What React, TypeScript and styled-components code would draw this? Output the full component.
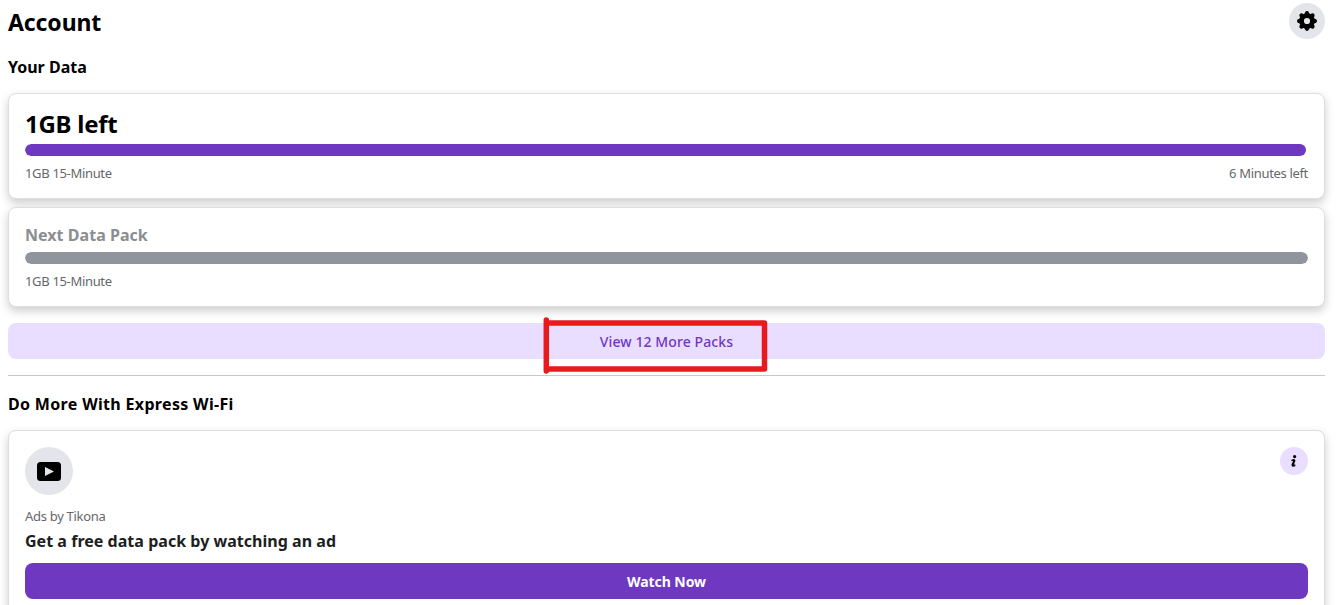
import React from "react";
import styled, { createGlobalStyle } from "styled-components";

const GlobalStyle = createGlobalStyle`
  * { box-sizing: border-box; }
  html, body { margin: 0; background: #fff; overflow: hidden; }
  body { font-family: "Noto Sans", "Open Sans", sans-serif; color: #000; }
  h1 { margin: 0; }
`;

const Page = styled.main`
  height: 605px;
  padding: 3px 15px 0 8px;
  overflow: hidden;
`;

const Header = styled.header`
  display: flex;
  align-items: center;
  justify-content: space-between;
  height: 36px;
`;

interface LabelProps {
  $size: number;
  $line: number;
  $weight?: number;
  $color?: string;
  $track?: number;
  $drop?: number;
}

const Label = styled.span<LabelProps>`
  display: block;
  white-space: nowrap;
  padding-top: ${(p) => p.$drop ?? 0}px;
  font-size: ${(p) => p.$size}px;
  line-height: ${(p) => p.$line}px;
  font-weight: ${(p) => p.$weight ?? 400};
  color: ${(p) => p.$color ?? "#000"};
  letter-spacing: ${(p) => p.$track ?? 0}px;
`;

const SectionTitle = styled.div`
  padding: 16px 0 14px;
`;

const Circle = styled.div<{ $size: number; $bg: string }>`
  display: flex;
  flex: none;
  align-items: center;
  justify-content: center;
  width: ${(p) => p.$size}px;
  height: ${(p) => p.$size}px;
  border-radius: 50%;
  background: ${(p) => p.$bg};
`;

const Card = styled.section<{ $height: number }>`
  height: ${(p) => p.$height}px;
  padding: 16px;
  border: 1px solid #dddee0;
  border-radius: 8px;
  background: #fff;
  box-shadow: 0 4px 10px rgba(0, 0, 0, 0.2);
`;

const PackCards = styled.div`
  display: flex;
  flex-direction: column;
  gap: 8px;
`;

const Track = styled.div`
  height: 12px;
  margin-top: 6px;
  margin-bottom: 8px;
  border-radius: 6px;
  overflow: hidden;
`;

const Fill = styled.div<{ $color: string }>`
  height: 100%;
  border-radius: 6px;
  background: ${(p) => p.$color};
`;

const SplitRow = styled.div`
  display: flex;
  align-items: flex-start;
  justify-content: space-between;
`;

const Button = styled.button<{ $primary?: boolean; $top: number }>`
  display: flex;
  align-items: center;
  justify-content: center;
  position: relative;
  width: 100%;
  height: 36px;
  margin-top: ${(p) => p.$top}px;
  padding: 0;
  border: 0;
  border-radius: 8px;
  font-family: inherit;
  background: ${(p) => (p.$primary ? "#6f38c0" : "#e9deff")};
`;

const Divider = styled.hr`
  height: 1px;
  margin: 16px 0 0;
  border: 0;
  background: #c8c9cc;
`;

const Highlight = styled.svg`
  position: absolute;
  left: 533px;
  top: -8px;
  overflow: visible;
`;

const AdText = styled.div`
  padding-top: 12px;
`;

const GearIcon = () => (
  <svg width="20" height="20" viewBox="-10 -10 20 20" aria-hidden="true">
    <path
      fillRule="evenodd"
      d="M-7.8 0A7.8 7.8 0 1 0 7.8 0A7.8 7.8 0 1 0-7.8 0ZM-3.1 0A3.1 3.1 0 1 1 3.1 0A3.1 3.1 0 1 1-3.1 0Z"
    />
    {[0, 45, 90, 135, 180, 225, 270, 315].map((angle) => (
      <path
        key={angle}
        transform={`rotate(${angle})`}
        d="M-2.6-7L-1.9-8.6Q-1.4-10 0-10Q1.4-10 1.9-8.6L2.6-7Z"
      />
    ))}
  </svg>
);

const VideoIcon = () => (
  <svg width="24" height="20" viewBox="0 0 24 20" aria-hidden="true">
    <rect x="0" y="1" width="24" height="19" rx="3.5" />
    <path d="M8 6L17 10.5L8 15Z" fill="#e4e5eb" />
  </svg>
);

const InfoIcon = () => (
  <svg width="8" height="14" viewBox="0 0 8 14" aria-hidden="true">
    <circle cx="4.6" cy="2.6" r="1.6" />
    <path d="M1.2 6.6Q1.6 5.2 3.6 5.1Q5.6 5.1 5.4 6.8Q5.2 7.8 4.6 8.8Q4.1 9.8 4.3 10.6Q4.8 10.9 5.4 10.4L5.6 11.2Q4.9 12.9 3 12.8Q1.3 12.6 1.5 10.8Q1.6 9.8 2.3 8.8Q3 7.7 2.8 6.9Q2.2 6.6 1.4 7.2Z" />
  </svg>
);

export default function App() {
  return (
    <>
      <GlobalStyle />
      <Page>
        <Header>
          <Label as="h1" $size={23} $line={36} $weight={700} $track={-0.1} $drop={2}>
            Account
          </Label>
          <Circle $size={36} $bg="#e4e5eb">
            <GearIcon />
          </Circle>
        </Header>
        <SectionTitle>
          <Label $size={16} $line={24} $weight={700}>Your Data</Label>
        </SectionTitle>
        <PackCards>
          <Card $height={106}>
            <Label $size={24} $line={28} $weight={700} $track={-0.25}>1GB left</Label>
            <Track>
              <Fill $color="#6f38c0" style={{ width: "99.85%" }} />
            </Track>
            <SplitRow>
              <Label $size={13} $line={18} $color="#65676b" $track={-0.33}>1GB 15-Minute</Label>
              <Label $size={13} $line={18} $color="#65676b" $track={-0.33}>6 Minutes left</Label>
            </SplitRow>
          </Card>
          <Card $height={100}>
            <Label $size={16} $line={22} $weight={700} $color="#8a8d91" $track={0.04}>Next Data Pack</Label>
            <Track>
              <Fill $color="#90949c" />
            </Track>
            <Label $size={13} $line={18} $color="#65676b" $track={-0.33}>1GB 15-Minute</Label>
          </Card>
        </PackCards>
        <Button $top={16}>
          <Label $size={14} $line={20} $weight={500} $color="#6f38c0" $track={0.1} $drop={2}>View 12 More Packs</Label>
          <Highlight width="230" height="60" fill="none" stroke="#e81a1c" strokeWidth="5.5" strokeLinecap="round" strokeLinejoin="round">
            <path d="M5.3 5V56M8.5 8H223.5V54H5.5" />
          </Highlight>
        </Button>
        <Divider />
        <SectionTitle>
          <Label $size={16} $line={24} $weight={700} $track={0.33}>Do More With Express Wi-Fi</Label>
        </SectionTitle>
        <Card $height={220}>
          <SplitRow>
            <Circle $size={48} $bg="#e4e5eb">
              <VideoIcon />
            </Circle>
            <Circle $size={28} $bg="#e9deff">
              <InfoIcon />
            </Circle>
          </SplitRow>
          <AdText>
            <Label $size={13} $line={18} $color="#65676b" $track={-0.3}>Ads by Tikona</Label>
            <Label $size={16} $line={30} $weight={700} $color="#1c1e21" $track={0.03} $drop={1}>Get a free data pack by watching an ad</Label>
          </AdText>
          <Button $primary $top={7}>
            <Label $size={14} $line={20} $weight={700} $color="#fff" $track={-0.05} $drop={2}>Watch Now</Label>
          </Button>
        </Card>
      </Page>
    </>
  );
}
